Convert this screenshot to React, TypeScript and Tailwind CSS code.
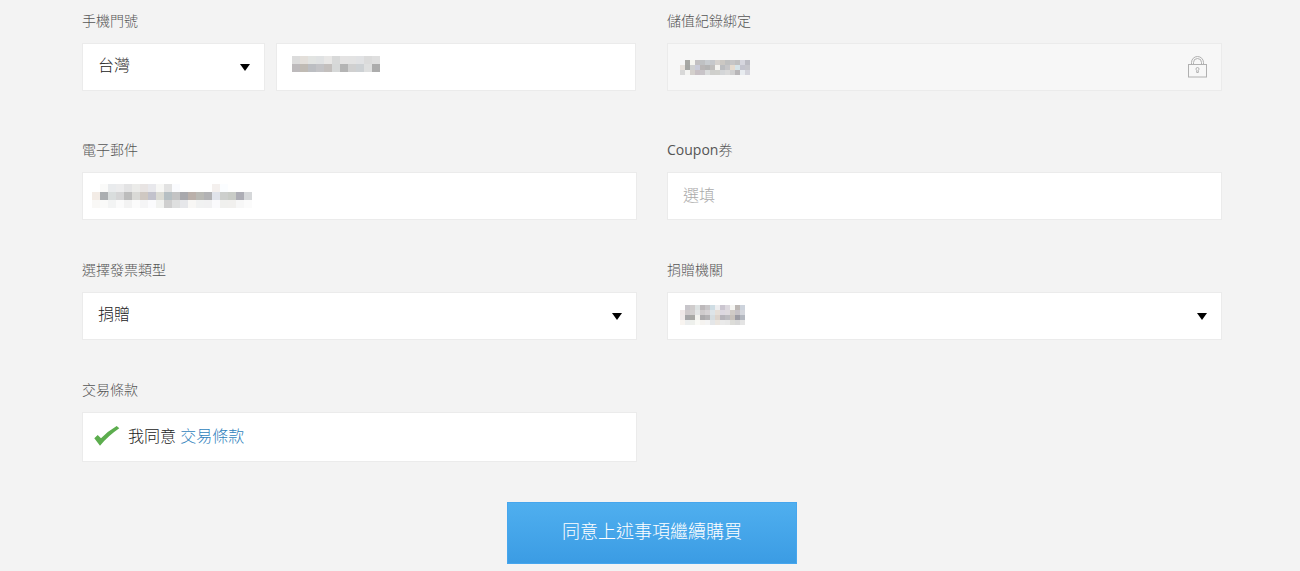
import { ReactNode } from 'react'

const FONT = "font-['Open_Sans','Noto_Sans_CJK_TC',sans-serif]"

// blurred-out values in the screenshot
const phoneBlur = [
  ['#dcdcdc', '#e3dfda', '#e2e4e2', '#e0e2e3', '#e8e7e6', '#d8d9d9', '#e4e3e3', '#e3e3e3', '#e1e2e4', '#dbdbdb', '#dfdfdf'],
  ['#bdbabc', '#c0bbb4', '#bcbec2', '#c3c3c6', '#c3bfbd', '#d6d8d8', '#b4b4b4', '#d0d0d0', '#cdd1d4', '#dedfdf', '#acacac'],
]

const emailBlur = [
  ['#ffffff', '#fafaf9', '#e9ebed', '#ececed', '#e3e3e4', '#ebebe9', '#e8e4e3', '#e8e8ec', '#f7f7f5', '#e2e2e2', '#fafbfe', '#ffffff', '#ffffff', '#ffffff', '#ffffff', '#f4f0ee', '#fbfdff', '#ffffff', '#ffffff', '#ffffff'],
  ['#f3ece6', '#abaeb1', '#d9dddd', '#d5d5d6', '#bcbcbc', '#d9d9d6', '#cfc8c2', '#c2c2cc', '#dbdbd4', '#b6bfc3', '#c3c3c4', '#a9a9ad', '#bab0aa', '#b9b9b4', '#b2b2b4', '#e0e3ea', '#cdcfcd', '#c9ccc7', '#adadb5', '#d6d8da'],
  ['#f9f8f6', '#fafaf9', '#f3f4f4', '#fbfbfb', '#f3f3f3', '#fbfbfb', '#f5f5f6', '#fbfbfd', '#f1f2f0', '#cfcfcf', '#dedfdf', '#e6e7ea', '#f8f7f5', '#f1f2f2', '#f1f1f2', '#fafafc', '#f0f0ee', '#f1f0ee', '#f7f7f7', '#fbfbfb'],
]

const storedBlur = [
  ['#f7f7f7', '#a8a8a4', '#f5f5f0', '#c2c0c2', '#bfc1c3', '#c8ccd0', '#c6c8cb', '#d6d2ce', '#cbc8c3', '#bfc0c0', '#c6c6c6', '#c0c0c0', '#d6d6de', '#bcbcc4'],
  ['#e8e2dc', '#a5a6a3', '#cfd0d0', '#c9cbd8', '#b9b6b6', '#b4b4b4', '#c0bebc', '#f4f3ef', '#bbbdc0', '#c6c6c8', '#e6dccf', '#d6e4e8', '#c4c4ce', '#c6c6cc'],
  ['#d8d8d8', '#f4f4f2', '#d4d0cc', '#c8c0c4', '#c8c4c8', '#dadcdc', '#cfcfcc', '#d0d0cc', '#d4d6d8', '#dadada', '#d0d0d0', '#b8b6b8', '#e8ecf0', '#d4d4dc'],
]

const charityBlur = [
  ['#ffffff', '#c8c6cb', '#cfcccc', '#dde2e2', '#bdb9bb', '#c8c6c8', '#cfdde4', '#eeeef0', '#cbc6d0', '#dcd8de', '#f5f5f2', '#bdb8b5', '#cdd3dc'],
  ['#f0e8e8', '#cfc9cb', '#d2cfcf', '#e4e6e6', '#cfcbcc', '#d6d2d4', '#dde4e8', '#e6dfd8', '#dcd8e0', '#dedade', '#d0cbc6', '#c6c2c6', '#d4d6dc'],
  ['#f0eaea', '#a6a6a8', '#a9a9a6', '#f4f4f0', '#acaaac', '#b4b2b4', '#d6dde0', '#ddd4cc', '#b6b4ba', '#bcbcc0', '#c8c2bc', '#9c9ca4', '#b4b8c0'],
  ['#f8f4f0', '#eceeee', '#eef0ec', '#fafaf6', '#f5f3f0', '#f4f4f4', '#e4e6e8', '#ebe6e0', '#eaeaea', '#e8e8e8', '#dcdcd8', '#d8d8d8', '#e4e4e4'],
]

function Blur({ rows, cell, className = '' }: { rows: string[][]; cell: number; className?: string }) {
  return (
    <svg width={rows[0].length * cell} height={rows.length * cell} className={`block shrink-0 ${className}`} shapeRendering="crispEdges">
      {rows.map((row, y) =>
        row.map((c, x) => <rect key={x} x={x * cell} y={y * cell} width={cell} height={cell} fill={c} />),
      )}
    </svg>
  )
}

function Caret() {
  return <span className="ml-auto w-0 h-0 border-x-[5px] border-x-transparent border-t-[7px] border-t-black" />
}

function Label({ children }: { children: ReactNode }) {
  return <div className="h-[22px] leading-[22px] mb-[11px] text-[14px] font-light text-[#555555]">{children}</div>
}

function Box({ children, className = '' }: { children?: ReactNode; className?: string }) {
  return (
    <div className={`h-12 flex items-center bg-white border border-[#ebebeb] text-[16px] font-light text-[#222222] ${className}`}>
      {children}
    </div>
  )
}

function LockIcon() {
  return (
    <svg width="20" height="22" viewBox="0 0 20 22" fill="none" stroke="#b0b0b0" className="ml-auto">
      <rect x="0.5" y="8.5" width="18" height="12.5" />
      <path d="M3.5 8.5V6.5a6 6 0 0 1 12 0v2" />
      <path d="M5.5 8.5V6.5a4 4 0 0 1 8 0v2" />
      <path d="M8 13a1.5 1.5 0 1 1 3 0c0 .7-.4 1-.7 1.3V16.5H8.7v-2.2C8.4 14 8 13.7 8 13z" />
    </svg>
  )
}

export default function App() {
  return (
    <div className={`min-h-[571px] bg-[#f3f3f3] pt-[10px] ${FONT} overflow-hidden`}>
      <div className="w-[1140px] ml-[82px] grid grid-cols-[555px_555px] gap-x-[30px]">
        {/* 手機門號 / 儲值紀錄 */}
        <div className="mb-12">
          <Label>手機門號</Label>
          <div className="flex gap-[11px] pr-px">
            <Box className="w-[183px] pl-[15px] pr-[14px]">
              <span className="mb-1">台灣</span>
              <Caret />
            </Box>
            <Box className="flex-1 pl-[15px]">
              <Blur rows={phoneBlur} cell={8} className="mb-[6px]" />
            </Box>
          </div>
        </div>
        <div className="mb-12">
          <Label>儲值紀錄綁定</Label>
          <Box className="!bg-[#f7f7f7] pl-3 pr-[13px]">
            <Blur rows={storedBlur} cell={5} />
            <LockIcon />
          </Box>
        </div>

        {/* 電子郵件 / Coupon */}
        <div className="mb-[39px]">
          <Label>電子郵件</Label>
          <Box className="pl-[9px]">
            <Blur rows={emailBlur} cell={8} />
          </Box>
        </div>
        <div className="mb-[39px]">
          <Label>
            <span className="font-normal">Coupon</span>券
          </Label>
          <Box className="pl-[15px] !text-[#aaaaaa]">
            <span className="mb-[2px]">選填</span>
          </Box>
        </div>

        {/* 發票 */}
        <div className="mb-[39px]">
          <Label>選擇發票類型</Label>
          <Box className="pl-[15px] pr-[14px]">
            <span className="mb-1">捐贈</span>
            <Caret />
          </Box>
        </div>
        <div className="mb-[39px]">
          <Label>捐贈機關</Label>
          <Box className="pl-3 pr-[14px]">
            <Blur rows={charityBlur} cell={5} className="mb-[2px]" />
            <Caret />
          </Box>
        </div>

        {/* 條款 */}
        <div className="col-start-1">
          <Label>交易條款</Label>
          <Box className="!h-[50px] pl-[11px]">
            <svg width="27" height="22" viewBox="0 0 27 22" className="shrink-0">
              <path d="M0.3 12.3 L3.7 9 L7 12.3 Q14 5 22.7 0 L25.3 2.3 Q14 10 6 19.7 Z" fill="#5cad4e" />
            </svg>
            <span className="ml-[7px] mb-[2px]">
              我同意 <a className="text-[#2f7fbc]">交易條款</a>
            </span>
          </Box>
        </div>
      </div>

      <div className="flex justify-center mt-10 pl-1">
        <button className="w-[290px] h-[62px] pb-1 border border-[#46a6ee] bg-gradient-to-b from-[#4fafef] to-[#3b9ce4] text-white text-[18px] font-light">
          同意上述事項繼續購買
        </button>
      </div>
    </div>
  )
}
